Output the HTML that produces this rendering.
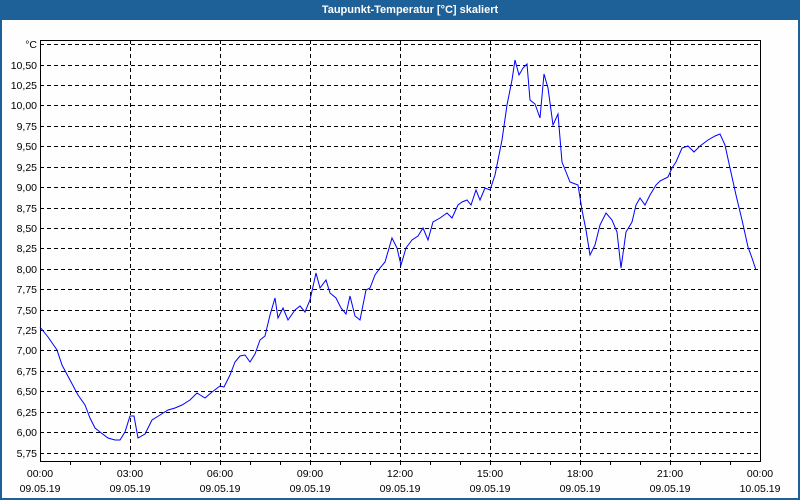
<!DOCTYPE html>
<html><head><meta charset="utf-8"><style>
html,body{margin:0;padding:0;width:800px;height:500px;overflow:hidden;background:#fff}
svg{display:block}
text{font-family:"Liberation Sans",sans-serif;font-size:10.5px;fill:#000}
</style></head><body>
<svg width="800" height="500" viewBox="0 0 800 500">
<rect x="0" y="0" width="800" height="500" fill="#1e6199"/>
<rect x="2" y="20" width="796" height="478" fill="#fdfefd"/>
<text x="410" y="13" text-anchor="middle" style="font-weight:bold;fill:#fff;font-size:11px">Taupunkt-Temperatur [°C] skaliert</text>
<g stroke="#000" stroke-width="1" stroke-dasharray="4,3" fill="none">
<path d="M40 44.5H760M40 65.5H760M40 85.5H760M40 105.5H760M40 126.5H760M40 146.5H760M40 167.5H760M40 187.5H760M40 208.5H760M40 228.5H760M40 248.5H760M40 269.5H760M40 289.5H760M40 310.5H760M40 330.5H760M40 350.5H760M40 371.5H760M40 391.5H760M40 412.5H760M40 432.5H760M40 453.5H760"/>
<path d="M130.5 40V461M220.5 40V461M310.5 40V461M400.5 40V461M490.5 40V461M580.5 40V461M670.5 40V461"/>
</g>
<rect x="40.5" y="40.5" width="720" height="421" fill="none" stroke="#000"/>
<path stroke="#000" fill="none" d="M70.5 461v4M100.5 461v4M130.5 461v4M160.5 461v4M190.5 461v4M220.5 461v4M250.5 461v4M280.5 461v4M310.5 461v4M340.5 461v4M370.5 461v4M400.5 461v4M430.5 461v4M460.5 461v4M490.5 461v4M520.5 461v4M550.5 461v4M580.5 461v4M610.5 461v4M640.5 461v4M670.5 461v4M700.5 461v4M730.5 461v4"/>
<g text-anchor="end">
<text x="37" y="48">°C</text>
<text x="37" y="69">10,50</text><text x="37" y="89">10,25</text><text x="37" y="109">10,00</text>
<text x="37" y="130">9,75</text><text x="37" y="150">9,50</text><text x="37" y="171">9,25</text>
<text x="37" y="191">9,00</text><text x="37" y="212">8,75</text><text x="37" y="232">8,50</text>
<text x="37" y="252">8,25</text><text x="37" y="273">8,00</text><text x="37" y="293">7,75</text>
<text x="37" y="314">7,50</text><text x="37" y="334">7,25</text><text x="37" y="354">7,00</text>
<text x="37" y="375">6,75</text><text x="37" y="395">6,50</text><text x="37" y="416">6,25</text>
<text x="37" y="436">6,00</text><text x="37" y="457">5,75</text>
</g>
<g text-anchor="middle">
<text x="40" y="477">00:00</text><text x="40" y="492">09.05.19</text>
<text x="130" y="477">03:00</text><text x="130" y="492">09.05.19</text>
<text x="220" y="477">06:00</text><text x="220" y="492">09.05.19</text>
<text x="310" y="477">09:00</text><text x="310" y="492">09.05.19</text>
<text x="400" y="477">12:00</text><text x="400" y="492">09.05.19</text>
<text x="490" y="477">15:00</text><text x="490" y="492">09.05.19</text>
<text x="580" y="477">18:00</text><text x="580" y="492">09.05.19</text>
<text x="670" y="477">21:00</text><text x="670" y="492">09.05.19</text>
<text x="760" y="477">00:00</text><text x="760" y="492">10.05.19</text>
</g>
<polyline fill="none" stroke="#0000ff" stroke-width="1" points="40,327 48,337 57,350 62,365 70,380 78,395 85,405 90,418 95,428 100,432 108,438 115,440 120,440 125,432 130,416 134,416 138,438 145,434 152,420 160,415 168,410 175,408 182,405 190,400 197,393 205,398 212,392 220,386 224,387 230,375 235,362 240,356 245,355 250,362 255,354 260,340 265,336 270,315 275,298 278,318 283,308 288,320 295,310 300,306 305,312 310,300 316,273 320,288 326,280 330,293 336,298 341,308 346,314 350,296 355,316 360,320 366,290 370,288 375,275 380,268 385,262 392,238 397,248 401,265 406,248 412,240 418,236 423,228 428,240 433,222 440,218 447,213 452,218 458,205 462,202 467,200 471,205 476,190 480,200 485,188 490,190 495,175 502,140 507,105 512,80 515,60 519,75 523,68 527,64 530,100 535,104 540,118 544,74 548,88 553,125 558,114 562,162 566,172 570,182 578,185 582,210 586,230 590,255 595,245 600,225 606,213 612,220 617,232 621,268 626,232 632,222 636,205 640,198 645,205 650,195 656,185 660,181 668,177 672,168 676,162 682,148 688,146 694,152 700,146 708,140 715,136 720,134 725,145 730,168 736,195 742,220 748,247 752,258 756,270"/>
</svg>
</body></html>
